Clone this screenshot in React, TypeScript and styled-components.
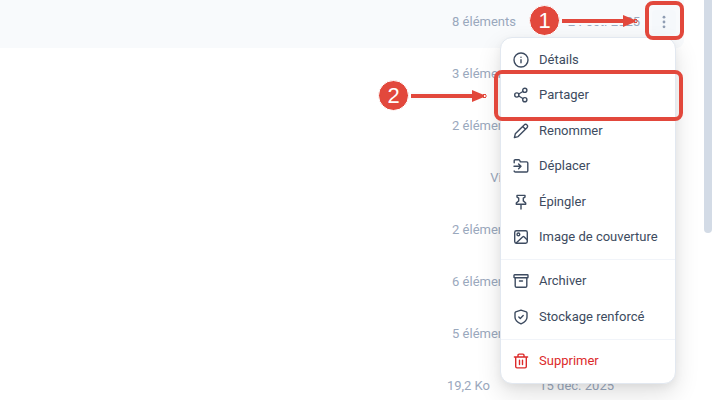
import React from "react";
import styled, { createGlobalStyle } from "styled-components";

const RED = "#e2483c";

const GlobalStyle = createGlobalStyle`
  *, *::before, *::after { box-sizing: border-box; }
  html, body, #root { height: 100%; }
  body {
    margin: 0;
    overflow: hidden;
    background: #fff;
    font-family: Roboto, "Noto Sans", sans-serif;
    font-size: 13px;
    line-height: 20px;
  }
`;

const Page = styled.main`
  position: relative;
  display: flex;
  height: 100vh;
  overflow: hidden;
`;

const FileList = styled.ul`
  display: grid;
  grid-auto-rows: 48px;
  align-content: start;
  gap: 4px;
  flex: 1;
  margin: 0;
  padding: 0;
  list-style: none;
`;

const FileRow = styled.li<{ $active?: boolean }>`
  display: grid;
  grid-template-columns: 1fr 124px 36px;
  align-items: center;
  margin-right: 28px;
  padding: 0 8px 4px 0;
  border-radius: 0 0 8px 0;
  color: #9aa8bd;
  background: ${(p) => (p.$active ? "#f8fafc" : "transparent")};
  white-space: nowrap;
`;

const Size = styled.span<{ $file?: boolean }>`
  text-align: right;
  padding-right: ${(p) => (p.$file ? 26 : 0)}px;
`;

const DateCell = styled.time<{ $file?: boolean }>`
  text-align: right;
  padding-right: ${(p) => (p.$file ? 26 : 0)}px;
`;

const MoreButton = styled.button`
  display: grid;
  place-items: center;
  justify-self: end;
  width: 24px;
  height: 24px;
  padding: 0;
  border: 0;
  border-radius: 4px;
  color: #8f9db3;
  background: #f5f8fb;
`;

const ScrollTrack = styled.div`
  position: absolute;
  top: 0;
  right: 0;
  width: 8px;
  height: 100%;
`;

const ScrollThumb = styled.div`
  height: 233px;
  border-radius: 0 0 4px 4px;
  background: #d3dbe6;
`;

const Menu = styled.div`
  position: absolute;
  top: 37px;
  right: 36px;
  display: flex;
  flex-direction: column;
  width: 176px;
  height: 347px;
  padding: 4px 0;
  border: 1px solid #e2e8f0;
  border-radius: 12px;
  background: #fff;
  box-shadow: 0 10px 24px rgba(0, 0, 0, 0.12), 0 3px 8px rgba(0, 0, 0, 0.05);
`;

const Group = styled.div<{ $count: number }>`
  display: grid;
  grid-auto-rows: 1fr;
  flex: ${(p) => p.$count} 1 0;
`;

const Divider = styled.hr`
  width: 100%;
  height: 1px;
  margin: 4px 0;
  border: 0;
  background: #f1f4f9;
`;

const MenuItem = styled.button<{ $danger?: boolean }>`
  display: flex;
  align-items: center;
  gap: 10px;
  min-height: 0;
  padding: 0 12px;
  border: 0;
  background: none;
  color: ${(p) => (p.$danger ? "#dc2a2a" : "#3d4b60")};
  font: inherit;
  text-align: left;
  white-space: nowrap;
`;

const Icon = styled.svg`
  flex: none;
  width: 16px;
  height: 16px;
  fill: none;
  stroke: currentColor;
  stroke-width: 1.4;
  stroke-linecap: round;
  stroke-linejoin: round;
`;

const Highlight = styled.div<{ $target: "more" | "share" }>`
  position: absolute;
  top: ${(p) => (p.$target === "more" ? 1 : 70)}px;
  right: ${(p) => (p.$target === "more" ? 28 : 29)}px;
  width: ${(p) => (p.$target === "more" ? 39 : 189)}px;
  height: ${(p) => (p.$target === "more" ? 39 : 51)}px;
  border: 4px solid ${RED};
  border-radius: 8px;
  pointer-events: none;
`;

const Callout = styled.div<{ $step: 1 | 2 }>`
  position: absolute;
  top: ${(p) => (p.$step === 1 ? 5 : 80)}px;
  right: ${(p) => (p.$step === 1 ? 74 : 225)}px;
  display: flex;
  align-items: center;
  gap: 2px;
`;

const Badge = styled.span`
  display: grid;
  place-items: center;
  width: 31px;
  height: 31px;
  border: 1px solid #fff;
  border-radius: 50%;
  background: ${RED};
  color: #fff;
  font: 22px/28px "Liberation Sans", sans-serif;
`;

const ArrowSvg = styled.svg`
  display: block;
`;

const icons = {
  info: (
    <>
      <circle cx="8" cy="8" r="7" />
      <path d="M8 7.8v3M8 5.1v.1" />
    </>
  ),
  share: (
    <>
      <circle cx="3.8" cy="8" r="2.1" />
      <circle cx="11.8" cy="3.3" r="2.1" />
      <circle cx="11.8" cy="12.7" r="2.1" />
      <path d="M5.7 7l4.2-2.5M5.7 9l4.2 2.5" />
    </>
  ),
  pencil: (
    <path d="M1.4 14.6l.9-3.8L11.2 1.9a1.9 1.9 0 0 1 2.8 0 1.9 1.9 0 0 1 0 2.8L5.1 13.6zM9.7 3.5l2.8 2.8" />
  ),
  move: (
    <path d="M1.2 4.8V2.7c0-.6.4-1 1-1h3.4c.5 0 .8.2 1 .6l.8 1.6h6.2c.7 0 1.2.5 1.2 1.2v7.7c0 .7-.5 1.2-1.2 1.2H2.4c-.7 0-1.2-.4-1.2-1.1M1 8.3h6.8M5.6 5.9L8 8.3l-2.4 2.4" />
  ),
  pin: (
    <path d="M8 10.2v4.9M4 1.4h8v1.7l-1.7 1.1v2.7L12.7 9v1.2H3.3V9l2.4-2.1V4.2L4 3.1z" />
  ),
  image: (
    <>
      <rect x="1.7" y="1.7" width="12.6" height="12.6" rx="1.7" />
      <circle cx="5.4" cy="5.4" r="1.4" />
      <path d="M3.2 14.1l6.6-6.3c.4-.4.8-.4 1.2 0l3.1 3" />
    </>
  ),
  archive: (
    <>
      <rect x="1" y="1.8" width="14" height="3" rx=".6" />
      <path d="M2.2 4.8v8.1c0 .8.5 1.3 1.3 1.3h9c.8 0 1.3-.5 1.3-1.3V4.8M6.5 8h3" />
    </>
  ),
  shield: (
    <path d="M8 1.1l5.3 1.8c.4.2.7.5.7 1v4.3c0 3.4-3 5.4-6 6.7-3-1.3-6-3.3-6-6.7V3.9c0-.5.3-.8.7-1zM5.8 8l1.5 1.5 2.9-2.9" />
  ),
  trash: (
    <path d="M1.4 4h13.2M5 4V2.2c0-.7.4-1.1 1.1-1.1h3.8c.7 0 1.1.4 1.1 1.1V4M2.7 4v9.6c0 .8.5 1.3 1.3 1.3h8c.8 0 1.3-.5 1.3-1.3V4M6.5 7.3v4.2M9.5 7.3v4.2" />
  ),
};

type Entry = { label: string; icon: keyof typeof icons; danger?: boolean };

const groups: Entry[][] = [
  [
    { label: "Détails", icon: "info" },
    { label: "Partager", icon: "share" },
    { label: "Renommer", icon: "pencil" },
    { label: "Déplacer", icon: "move" },
    { label: "Épingler", icon: "pin" },
    { label: "Image de couverture", icon: "image" },
  ],
  [
    { label: "Archiver", icon: "archive" },
    { label: "Stockage renforcé", icon: "shield" },
  ],
  [{ label: "Supprimer", icon: "trash", danger: true }],
];

const files = [
  { size: "8 éléments", date: "24 oct. 2025", active: true },
  { size: "3 éléments" },
  { size: "2 éléments" },
  { size: "Vide" },
  { size: "2 éléments" },
  { size: "6 éléments" },
  { size: "5 éléments" },
  { size: "19,2 Ko", date: "15 déc. 2025", file: true },
];

function Arrow({ length }: { length: number }) {
  return (
    <ArrowSvg width={length} height="14" viewBox={`0 0 ${length} 14`} aria-hidden="true">
      <path d={`M0 7H${length - 13}`} stroke="#f9fbfd" strokeWidth="8" />
      <path d={`M0 7H${length - 14}`} stroke={RED} strokeWidth="4" />
      <path d={`M${length - 15} 1L${length - 3} 6V8L${length - 15} 13z`} fill={RED} />
      <path d={`M${length - 4} 5.5h3M${length - 2} 7h2M${length - 4} 8.5h3`} stroke={RED} strokeWidth="1" />
    </ArrowSvg>
  );
}

export default function App() {
  return (
    <>
      <GlobalStyle />
      <Page>
        <FileList>
          {files.map((file, index) => (
            <FileRow key={index} $active={file.active}>
              <Size $file={file.file}>{file.size}</Size>
              <DateCell $file={file.file}>{file.date}</DateCell>
              {file.active && (
                <MoreButton aria-label="Plus d’actions">
                  <svg width="16" height="16" viewBox="0 0 16 16" fill="currentColor">
                    <circle cx="8" cy="3.2" r="1.4" />
                    <circle cx="8" cy="8" r="1.4" />
                    <circle cx="8" cy="12.8" r="1.4" />
                  </svg>
                </MoreButton>
              )}
            </FileRow>
          ))}
        </FileList>
        <ScrollTrack>
          <ScrollThumb />
        </ScrollTrack>
        <Menu role="menu">
          {groups.map((group, index) => (
            <React.Fragment key={index}>
              {index > 0 && <Divider />}
              <Group $count={group.length} role="group">
                {group.map((item) => (
                  <MenuItem key={item.label} role="menuitem" $danger={item.danger}>
                    <Icon viewBox="0 0 16 16" aria-hidden="true">{icons[item.icon]}</Icon>
                    {item.label}
                  </MenuItem>
                ))}
              </Group>
            </React.Fragment>
          ))}
        </Menu>
        <Highlight $target="more" />
        <Highlight $target="share" />
        <Callout $step={1}>
          <Badge>1</Badge>
          <Arrow length={76} />
        </Callout>
        <Callout $step={2}>
          <Badge>2</Badge>
          <Arrow length={76} />
        </Callout>
      </Page>
    </>
  );
}
